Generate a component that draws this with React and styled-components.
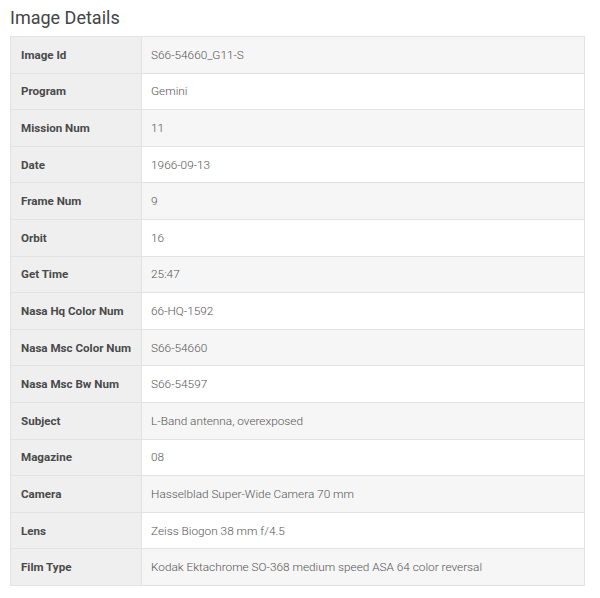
import React from "react";
import styled, { createGlobalStyle } from "styled-components";

const Global = createGlobalStyle`
  html, body { margin: 0; padding: 0; background: #fff; }
  body { font-family: Roboto, "Noto Sans", Arial, sans-serif; }
`;

const Page = styled.div`
  padding: 7px 15px 0 10px;
`;

const Title = styled.h2`
  margin: 0 0 7px 0;
  font-family: Roboto, "Noto Sans", Arial, sans-serif;
  font-weight: 400;
  font-size: 18px;
  line-height: 22px;
  color: #444;
`;

const Table = styled.table`
  width: 575px;
  border-collapse: collapse;
  border: 1px solid #e2e2e2;
  font-size: 11.6px;
`;

const Row = styled.tr`
  height: 36.6px;
  background: ${(p) => (p.$odd ? "#f6f6f6" : "#ffffff")};
`;

const Label = styled.th`
  width: 110px;
  text-align: left;
  padding: 0 10px;
  font-weight: 700;
  color: #4a4a4a;
  white-space: nowrap;
  background: #efefef;
  border: 1px solid #e2e2e2;
`;

const Value = styled.td`
  padding: 0 9px;
  font-size: 11.8px;
  font-weight: 300;
  color: #555;
  border: 1px solid #e2e2e2;
`;

const data = [
  ["Image Id", "S66-54660_G11-S"],
  ["Program", "Gemini"],
  ["Mission Num", "11"],
  ["Date", "1966-09-13"],
  ["Frame Num", "9"],
  ["Orbit", "16"],
  ["Get Time", "25:47"],
  ["Nasa Hq Color Num", "66-HQ-1592"],
  ["Nasa Msc Color Num", "S66-54660"],
  ["Nasa Msc Bw Num", "S66-54597"],
  ["Subject", "L-Band antenna, overexposed"],
  ["Magazine", "08"],
  ["Camera", "Hasselblad Super-Wide Camera 70 mm"],
  ["Lens", "Zeiss Biogon 38 mm f/4.5"],
  ["Film Type", "Kodak Ektachrome SO-368 medium speed ASA 64 color reversal"],
];

export default function App() {
  return (
    <>
      <Global />
      <Page>
        <Title>Image Details</Title>
        <Table>
          <tbody>
            {data.map(([k, v], i) => (
              <Row key={k} $odd={i % 2 === 0}>
                <Label>{k}</Label>
                <Value>{v}</Value>
              </Row>
            ))}
          </tbody>
        </Table>
      </Page>
    </>
  );
}
